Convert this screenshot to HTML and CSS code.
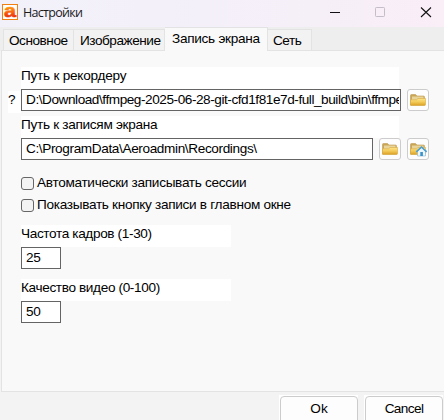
FILE: index.html
```html
<!DOCTYPE html>
<html lang="ru">
<head>
<meta charset="utf-8">
<title>Настройки</title>
<link rel="stylesheet" href="styles.css">
</head>
<body>
<svg class="defs" width="0" height="0" aria-hidden="true">
  <defs>
    <linearGradient id="gold" x1="0" y1="0" x2="0" y2="1">
      <stop offset="0" stop-color="#ffe58a"/><stop offset=".5" stop-color="#f2ca58"/><stop offset="1" stop-color="#dba023"/>
    </linearGradient>
    <symbol id="folder" viewBox="0 0 16 14">
      <path d="M.5 12V2.5Q.5 1.5 1.5 1.5H5.5L7 3H13.5Q14.5 3 14.5 4V12Z" fill="#c9a654" stroke="#bd9c55" stroke-width=".6"/>
      <path d="M2 3.5H13.5V7H2Z" fill="#e8d49a"/>
      <path d="M.5 12.2V6.8H6.5L8 5.5H15.5V11.5Q15.5 12.5 14.5 12.5H.8Z" fill="url(#gold)" stroke="#d9aa42" stroke-width=".6"/>
    </symbol>
  </defs>
</svg>
<div class="window">
  <header class="titlebar">
    <svg class="logo" width="16" height="16" viewBox="0 0 16 16">
      <defs><linearGradient id="logo-fill" x1="0" y1="0" x2="0" y2="1"><stop offset=".3" stop-color="#ff9a10"/><stop offset=".6" stop-color="#f85a10"/><stop offset=".9" stop-color="#e01808"/></linearGradient></defs>
      <rect x=".5" y=".5" width="15" height="15" fill="#fff" stroke="#f08010"/>
      <text class="logo-letter" x="2" y="13" textLength="12" lengthAdjust="spacingAndGlyphs">a</text>
    </svg>
    <span class="title">Настройки</span>
    <svg class="controls" width="110" height="26" viewBox="0 0 110 26" fill="none">
      <path d="M2 12.5H12" stroke="#111"/>
      <rect x="47.5" y="7.5" width="9" height="9" rx=".8" stroke="#c5bdc8"/>
      <path d="M93 7.5L103 17M103 7.5L93 17" stroke="#111" stroke-width="1.1"/>
    </svg>
  </header>
  <nav class="tabs">
    <span class="tab tab-main">Основное</span>
    <span class="tab tab-image">Изображение</span>
    <span class="tab tab-record active">Запись экрана</span>
    <span class="tab tab-net">Сеть</span>
  </nav>
  <main class="panel">
    <div class="label wide"><span class="t-rec">Путь к рекордеру</span></div>
    <div class="row first">
      <span class="help">?</span>
      <div class="field path"><span class="t-path">D:\Download\ffmpeg-2025-06-28-git-cfd1f81e7d-full_build\bin\ffmpe</span></div>
      <button class="icon"><svg width="16" height="14"><use href="#folder"/></svg></button>
    </div>
    <div class="label wide second"><span class="t-dir">Путь к записям экрана</span></div>
    <div class="row">
      <div class="field folder"><span class="t-folder">C:\ProgramData\Aeroadmin\Recordings\</span></div>
      <button class="icon"><svg width="16" height="14"><use href="#folder"/></svg></button>
      <button class="icon"><svg width="17" height="16" viewBox="0 0 17 16">
        <use href="#folder" y="1" width="16" height="14"/>
        <path d="M7.5 10V15H15.5V10L11.5 6.5Z" fill="#edf6fb" stroke="#8db4ca" stroke-width=".6"/>
        <path d="M6.3 10.8L11.5 6L16.7 10.8" fill="none" stroke="#4b9fd2" stroke-width="1.6"/>
        <rect x="10.3" y="11" width="2.6" height="4" fill="#3992c9"/>
      </svg></button>
    </div>
    <div class="check"><i class="box"></i><span class="t-auto">Автоматически записывать сессии</span></div>
    <div class="check"><i class="box"></i><span class="t-show">Показывать кнопку записи в главном окне</span></div>
    <div class="label rate"><span class="t-rate">Частота кадров (1-30)</span></div>
    <div class="field small">25</div>
    <div class="label quality"><span class="t-quality">Качество видео (0-100)</span></div>
    <div class="field small">50</div>
  </main>
  <footer class="footer">
    <div class="plate"><button class="btn">Ok</button></div>
    <div class="plate"><button class="btn cancel">Cancel</button></div>
  </footer>
</div>
</body>
</html>
```

FILE: styles.css
```css
* { box-sizing: border-box; }
body { margin: 0; font: 13.6px/22px "Liberation Sans", Arial, sans-serif; color: #000; }
.defs { position: absolute; }
.window { width: 444px; height: 420px; overflow: hidden; background: #f3f3f3; }
.titlebar { height: 27px; display: flex; align-items: flex-start; padding: 4px 0 0 2px; background: linear-gradient(90deg, #f2f1fa, #f5eff8 70%, #faeef7); }
.logo { flex: none; overflow: visible; }
.logo-letter { font: bold 18px "Liberation Sans", Arial, sans-serif; fill: url(#logo-fill); stroke: url(#logo-fill); stroke-width: .6; }
.title { font: 12.5px/18px "Open Sans", "Noto Sans", sans-serif; letter-spacing: -.7px; margin-left: 5px; color: #1b1b1b; }
.controls { margin: -4px 6px 0 auto; flex: none; }
.tabs { height: 24px; display: flex; align-items: flex-end; padding-left: 3px; background: #eee; position: relative; }
.tabs::after { content: ""; position: absolute; left: 1px; right: 0; bottom: 0; height: 1px; background: #e3e3e3; }
.tab { height: 22px; padding-left: 6px; line-height: 21px; letter-spacing: -.46px; white-space: nowrap; background: #f2f2f2; border: 1px solid #e3e3e3; border-left-width: 0; }
.tab-main { width: 71px; padding-left: 5px; border-left-width: 1px; }
.tab-image { width: 91px; }
.tab-record { width: 103px; }
.tab-net { width: 44px; padding-left: 5px; letter-spacing: -.5px; }
.tab.active { height: 24px; padding-left: 7px; letter-spacing: -.28px; background: #f9f9f9; border-bottom: 0; position: relative; z-index: 1; }
.panel { height: 341px; margin-left: 1px; padding: 16px 0 0 19px; background: #f9f9f9; border-left: 1px solid #e3e3e3; border-bottom: 1px solid #e3e3e3; }
.label { height: 22px; line-height: 18px; width: 210px; background: #fff; white-space: nowrap; }
.label.wide { width: 378px; }
.label.second { margin-top: 5px; }
.t-rec { letter-spacing: -.24px; }
.t-path { letter-spacing: -.44px; }
.t-folder { letter-spacing: -.37px; }
.t-dir { letter-spacing: -.3px; }
.t-auto, .t-show { letter-spacing: -.3px; }
.t-rate, .t-quality { letter-spacing: -.36px; }
.row { display: flex; gap: 6px; height: 22px; }
.row.first { margin-left: -13px; gap: 0; }
.row.first .icon { margin-left: 6px; }
.help { width: 13px; height: 22px; margin-top: 2px; line-height: 17px; background: #fff; }
.field { height: 22px; border: 1px solid #646464; background: #fff; padding-left: 4px; line-height: 19px; white-space: nowrap; overflow: hidden; }
.field.path { width: 380px; padding-right: 1px; }
.field.path span { display: block; overflow: hidden; }
.field.folder { width: 352px; }
.field.small { width: 40px; letter-spacing: -.3px; }
.icon { width: 22px; height: 22px; padding: 0; display: flex; align-items: center; justify-content: center; border: 1px solid #ccc; border-radius: 3px; background: #fdfdfd; }
.check { height: 22px; display: flex; align-items: center; gap: 3px; white-space: nowrap; }
.row + .check { margin-top: 12px; }
.box { width: 13px; height: 13px; border: 1px solid #666; border-radius: 3px; background: #f3f3f3; }
.label.rate { margin-top: 9px; }
.label.quality { margin-top: 10px; }
.footer { height: 40px; display: flex; gap: 6px; padding: 3px 0 0 279px; }
.plate { width: 79px; flex: none; padding: 1px; background: #fff; }
.btn { display: block; width: 78px; height: 28px; padding: 0 0 2px; border: 1px solid #ccc; border-radius: 4px; background: #fdfdfd; font: inherit; color: #000; }
.btn.cancel { letter-spacing: -.6px; }
```
